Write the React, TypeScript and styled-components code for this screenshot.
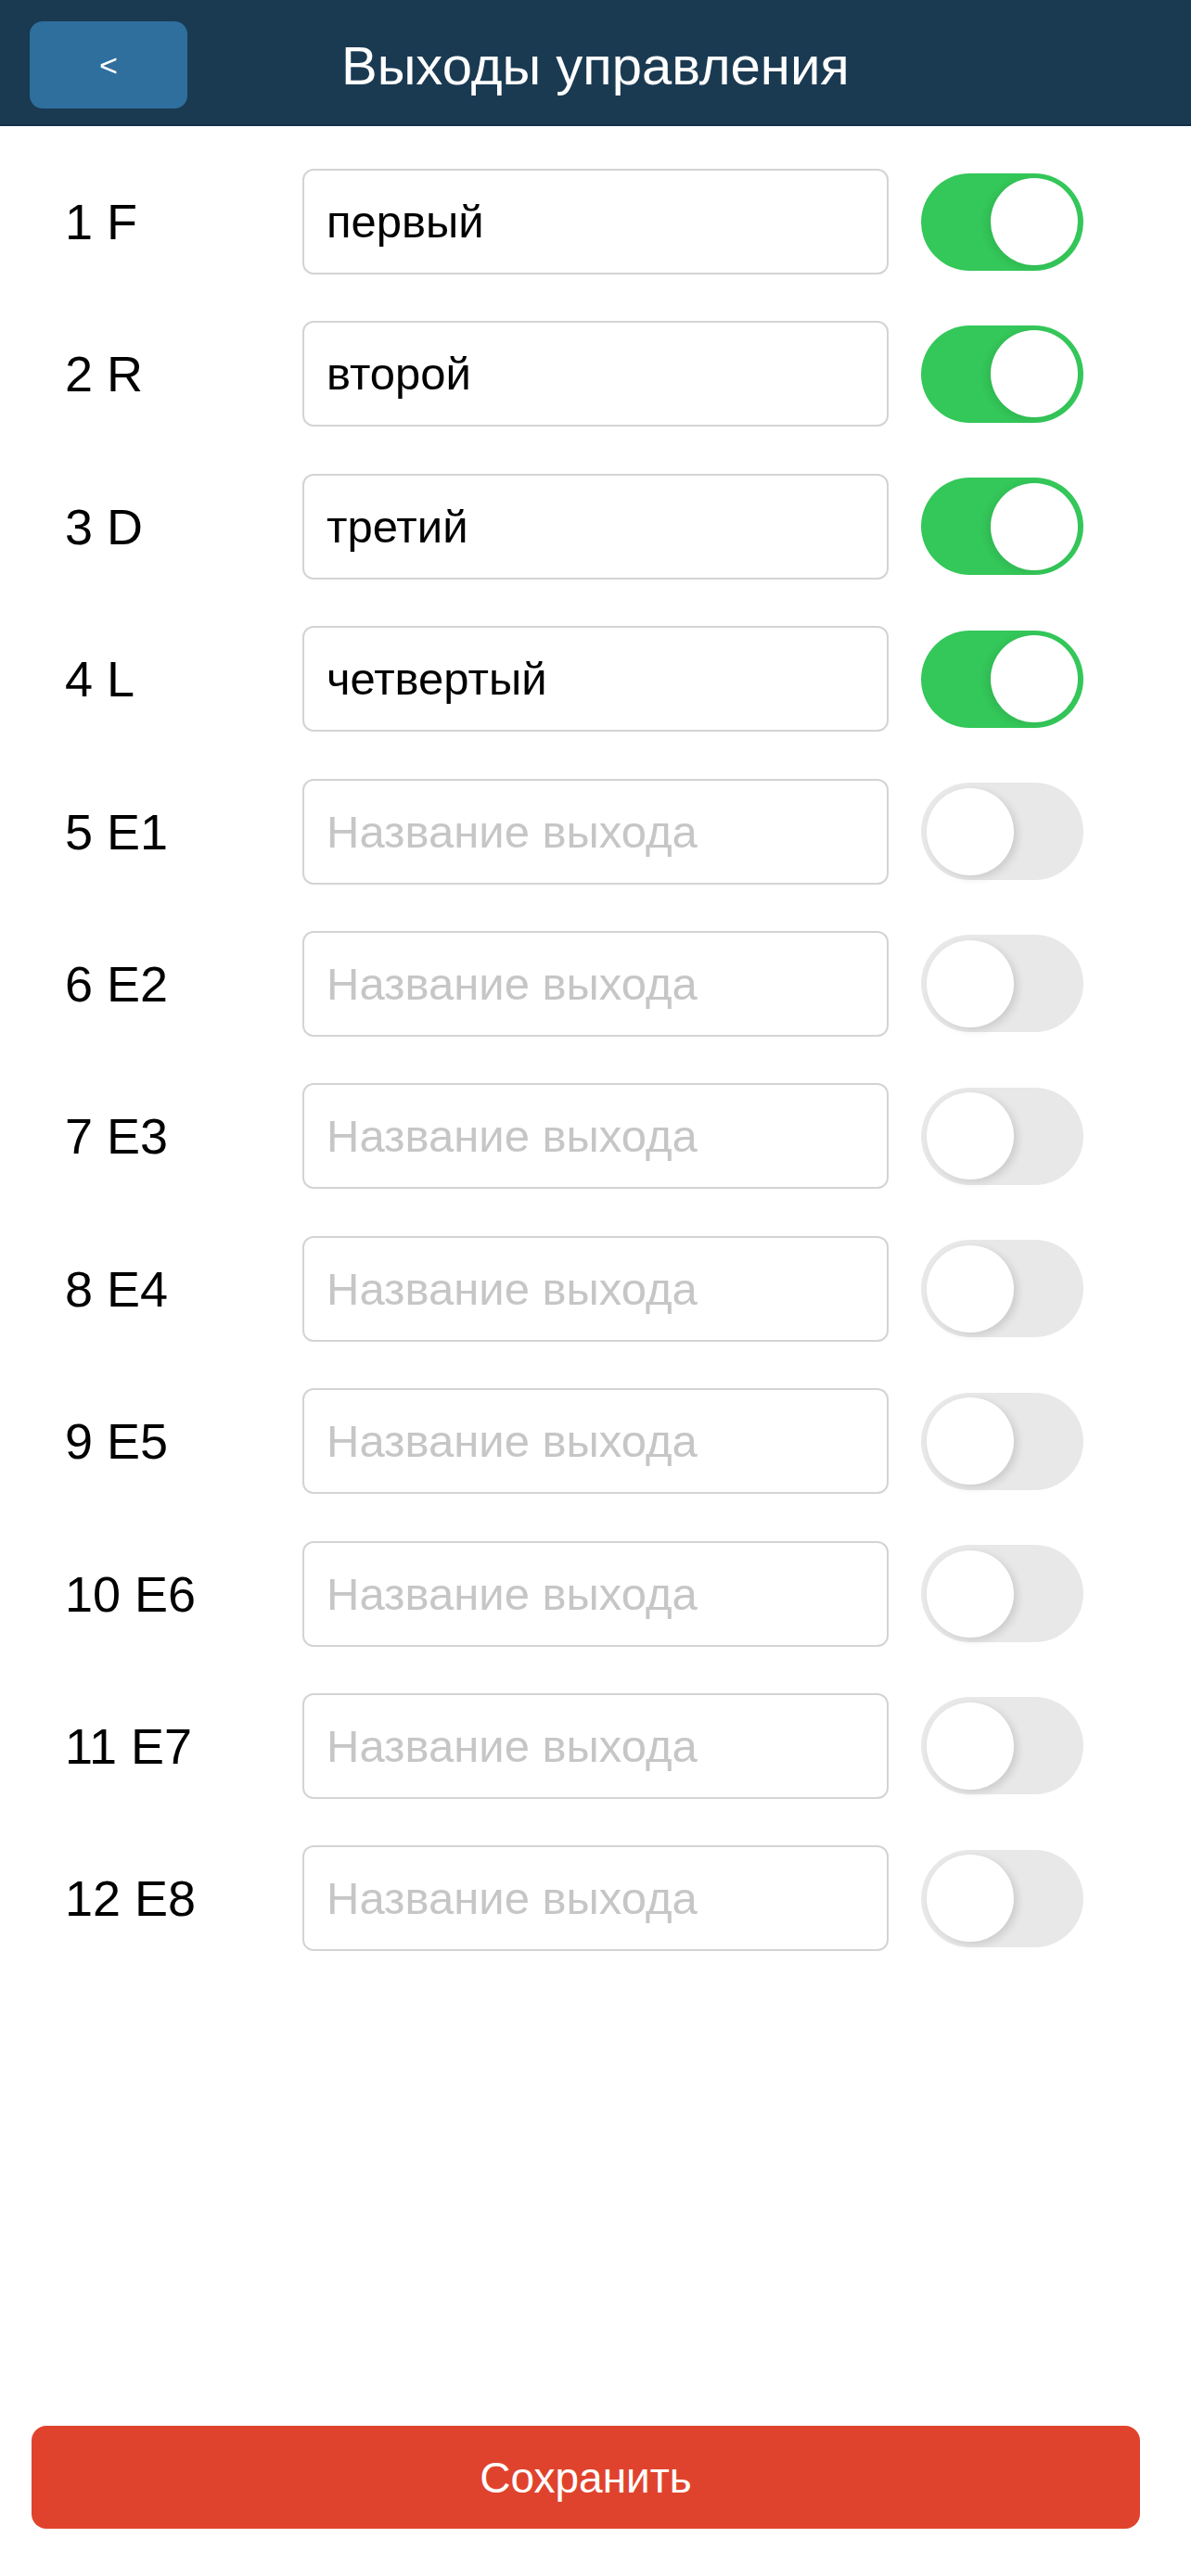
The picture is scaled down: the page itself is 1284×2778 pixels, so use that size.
import React, { useState } from 'react'
import styled, { createGlobalStyle } from 'styled-components'

const GlobalStyle = createGlobalStyle`
  html, body {
    margin: 0;
    padding: 0;
    background: #ffffff;
    font-family: 'Liberation Sans', Arial, sans-serif;
  }
  #root {
    min-height: 2778px;
  }
`

type Output = { num: number; code: string; name: string; on: boolean }

const OUTPUTS: Output[] = [
  { num: 1, code: 'F', name: 'первый', on: true },
  { num: 2, code: 'R', name: 'второй', on: true },
  { num: 3, code: 'D', name: 'третий', on: true },
  { num: 4, code: 'L', name: 'четвертый', on: true },
  { num: 5, code: 'E1', name: '', on: false },
  { num: 6, code: 'E2', name: '', on: false },
  { num: 7, code: 'E3', name: '', on: false },
  { num: 8, code: 'E4', name: '', on: false },
  { num: 9, code: 'E5', name: '', on: false },
  { num: 10, code: 'E6', name: '', on: false },
  { num: 11, code: 'E7', name: '', on: false },
  { num: 12, code: 'E8', name: '', on: false },
]

const Toggle = ({ on, onChange }: { on: boolean; onChange: () => void }) => (
  <Track on={on} onClick={onChange}>
    <Knob on={on} />
  </Track>
)

const App = () => {
  const [items, setItems] = useState(OUTPUTS)

  const flip = (i: number) =>
    setItems((prev) => prev.map((it, idx) => (idx === i ? { ...it, on: !it.on } : it)))

  const rename = (i: number, name: string) =>
    setItems((prev) => prev.map((it, idx) => (idx === i ? { ...it, name } : it)))

  return (
    <Page>
      <GlobalStyle />
      <Header>
        <BackButton>&lt;</BackButton>
        <Title>Выходы управления</Title>
      </Header>
      <List>
        {items.map((it, i) => (
          <Row key={it.num}>
            <Label>
              {it.num} {it.code}
            </Label>
            <NameInput
              value={it.name}
              placeholder="Название выхода"
              onChange={(e) => rename(i, e.target.value)}
            />
            <Toggle on={it.on} onChange={() => flip(i)} />
          </Row>
        ))}
      </List>
      <Footer>
        <SaveButton>Сохранить</SaveButton>
      </Footer>
    </Page>
  )
}

export default App

const Page = styled.div`
  display: flex;
  flex-direction: column;
  min-height: 2778px;
  background: #ffffff;
`

const Header = styled.header`
  display: flex;
  align-items: center;
  height: 136px;
  box-sizing: border-box;
  padding: 0 0 0 32px;
  background: #1a3a52;
  border-bottom: 2px solid #123046;
`

const BackButton = styled.button`
  width: 170px;
  height: 94px;
  margin-top: 6px;
  border: none;
  border-radius: 14px;
  background: #2e6f9e;
  color: #ffffff;
  font-family: 'Liberation Sans', Arial, sans-serif;
  font-size: 34px;
  cursor: pointer;
`

const Title = styled.h1`
  margin: 6px 0 0 166px;
  color: #ffffff;
  font-size: 58px;
  font-weight: 400;
`

const List = styled.div`
  display: flex;
  flex-direction: column;
  gap: 50.4px;
  padding-top: 46px;
`

const Row = styled.div`
  display: flex;
  align-items: center;
  height: 114px;
  padding-left: 70px;
`

const Label = styled.div`
  width: 256px;
  color: #000000;
  font-size: 54px;
`

const NameInput = styled.input`
  width: 632px;
  height: 114px;
  box-sizing: border-box;
  padding: 0 24px;
  border: 2px solid #d4d4d4;
  border-radius: 12px;
  background: #ffffff;
  color: #000000;
  font-family: 'Liberation Sans', Arial, sans-serif;
  font-size: 49px;
  outline: none;

  &::placeholder {
    color: #c6c6c6;
  }
`

const Track = styled.div<{ on: boolean }>`
  display: flex;
  align-items: center;
  justify-content: ${(p) => (p.on ? 'flex-end' : 'flex-start')};
  width: 175px;
  height: 105px;
  margin-left: 35px;
  box-sizing: border-box;
  padding: 0 6px;
  border-radius: 53px;
  background: ${(p) => (p.on ? '#34c759' : '#e8e8e8')};
  cursor: pointer;
`

const Knob = styled.div<{ on: boolean }>`
  width: 94px;
  height: 94px;
  border-radius: 50%;
  background: #ffffff;
  box-shadow: ${(p) =>
    p.on ? '-4px 2px 8px rgba(0, 0, 0, 0.08)' : '4px 3px 8px rgba(0, 0, 0, 0.12)'};
`

const Footer = styled.div`
  display: flex;
  margin-top: auto;
  padding: 0 55px 51px 34px;
`

const SaveButton = styled.button`
  flex: 1;
  height: 111px;
  border: none;
  border-radius: 16px;
  background: #e0432d;
  color: #ffffff;
  font-family: 'Liberation Sans', Arial, sans-serif;
  font-size: 46px;
  cursor: pointer;
`
